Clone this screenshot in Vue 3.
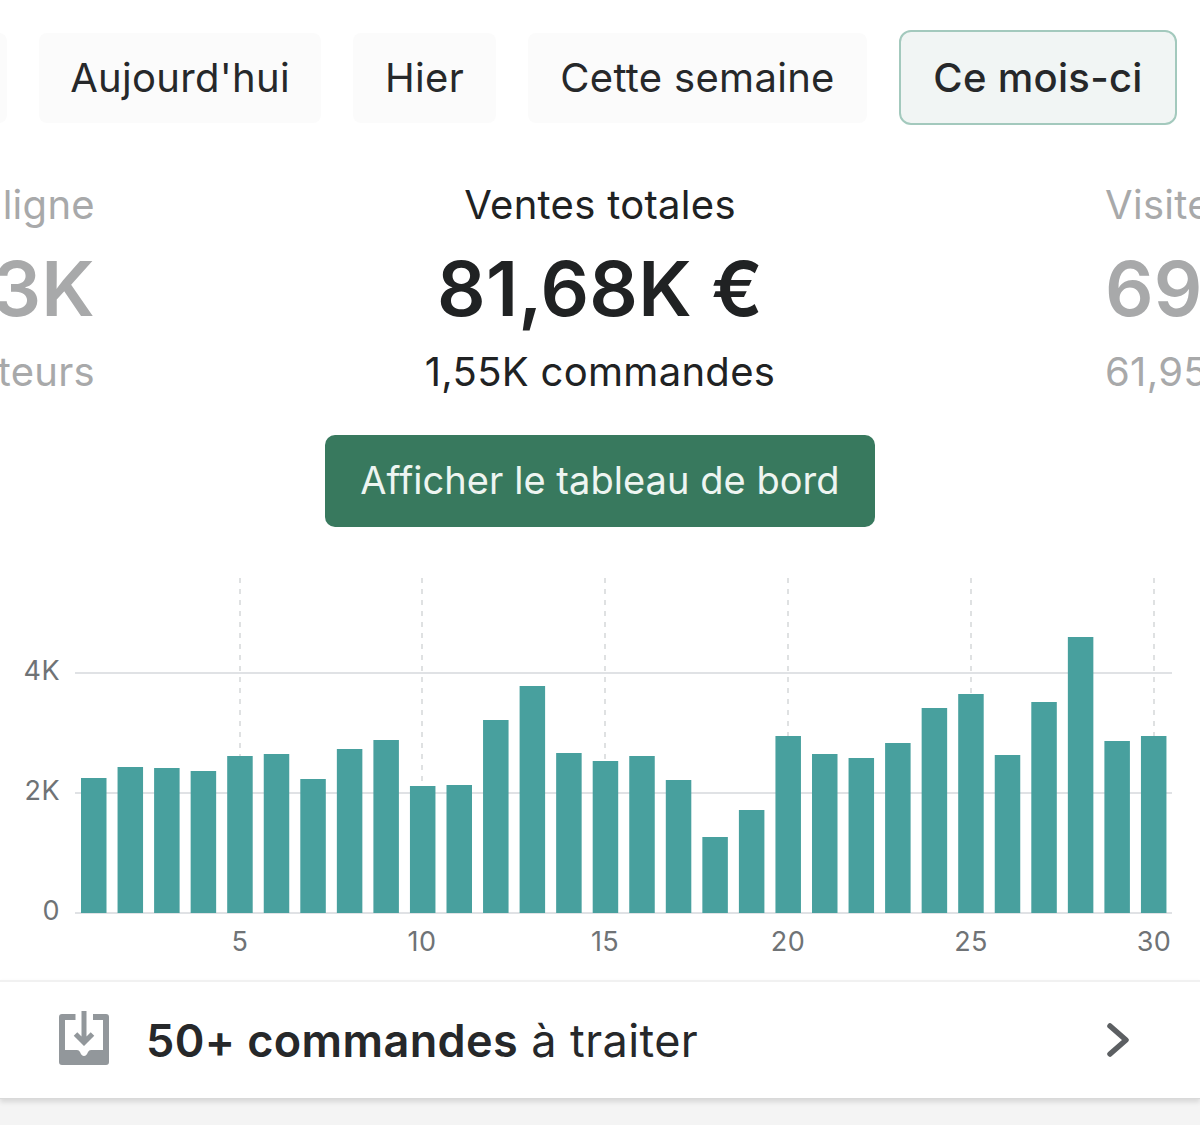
<script setup>
const tabs = [
  { label: 'Aujourd\'hui', width: 282 },
  { label: 'Hier', width: 143 },
  { label: 'Cette semaine', width: 339 },
]
const tops = [778, 767, 768, 771, 756, 754, 779, 749, 740, 786, 785, 720, 686, 753, 761, 756, 780, 837, 810, 736, 754, 758, 743, 708, 694, 755, 702, 637, 741, 736]
const bars = tops.map((top, i) => ({ x: 81 + i * 36.55, y: top - 570, h: 913 - top }))
const ticks = [
  { x: 240, label: '5' },
  { x: 422, label: '10' },
  { x: 605, label: '15' },
  { x: 788, label: '20' },
  { x: 971, label: '25' },
  { x: 1154, label: '30' },
]
const levels = [
  { y: 103, label: '4K' },
  { y: 223, label: '2K' },
  { y: 343, label: '0' },
]
</script>

<template>
  <main class="page">
    <nav class="tabs">
      <span class="tab stub"></span>
      <button v-for="tab in tabs" :key="tab.label" class="tab" :style="{ width: tab.width + 'px' }">{{ tab.label }}</button>
      <button class="tab active">Ce mois-ci</button>
    </nav>

    <section class="stats">
      <div class="stat side left">
        <div class="label">Boutique en ligne</div>
        <div class="value">1,13K</div>
        <div class="sub">61,2K visiteurs</div>
      </div>
      <div class="stat center">
        <div class="label">Ventes totales</div>
        <div class="value">81,68K €</div>
        <div class="sub">1,55K commandes</div>
      </div>
      <div class="stat side right">
        <div class="label">Visites</div>
        <div class="value">69,2K</div>
        <div class="sub">61,95K visiteurs</div>
      </div>
    </section>

    <div class="cta-row">
      <button class="cta">Afficher le tableau de bord</button>
    </div>

    <svg class="chart" width="1200" height="410" viewBox="0 0 1200 410">
      <line v-for="t in ticks" :key="'v' + t.x" :x1="t.x" :x2="t.x" y1="8" y2="343" class="vline" />
      <line v-for="l in levels" :key="'h' + l.y" x1="75" x2="1172" :y1="l.y" :y2="l.y" class="hline" />
      <rect v-for="(b, i) in bars" :key="i" :x="b.x" :y="b.y" width="25.5" :height="b.h" class="bar" />
      <text v-for="l in levels" :key="'t' + l.y" x="60" :y="l.y + 7" text-anchor="end" class="axis">{{ l.label }}</text>
      <text v-for="t in ticks" :key="'l' + t.x" :x="t.x" y="381" text-anchor="middle" class="axis">{{ t.label }}</text>
    </svg>

    <footer class="orders">
      <svg class="inbox" width="50" height="56" viewBox="0 0 50 56">
        <path d="M3 5H16.500V11H6V41H18Q20 41 21 43Q22.500 47 25 47Q27.500 47 29 43Q30 41 32 41H44V11H34V5H47Q50 5 50 8V53Q50 56 47 56H3Q0 56 0 53V8Q0 5 3 5Z" class="inbox-fill" />
        <path d="M25 2V33M16.500 25L25 33.500L33.500 25" class="inbox-arrow" />
      </svg>
      <p class="orders-text"><strong>50+ commandes</strong> à traiter</p>
      <svg class="chevron" width="24" height="36" viewBox="0 0 24 36">
        <path d="M4 4L20 18L4 32" />
      </svg>
    </footer>
    <div class="rest"></div>
  </main>
</template>

<style scoped>
.page {
  width: 1200px;
  height: 1125px;
  overflow: hidden;
  background: #fff;
  color: #202223;
  font-family: Inter, "Liberation Sans", sans-serif;
  display: flex;
  flex-direction: column;
}
.tabs {
  display: flex;
  justify-content: flex-end;
  align-items: center;
  gap: 32px;
  height: 95px;
  margin-top: 30px;
  padding-right: 23px;
  flex: none;
}
.tab {
  height: 90px;
  border: 0;
  border-radius: 8px;
  background: #fbfbfb;
  color: #26282a;
  font: 400 40px/1 Inter, "Liberation Sans", sans-serif;
  letter-spacing: 0.3px;
  padding: 0;
  flex: none;
}
.stub {
  width: 40px;
}
.active {
  width: 278px;
  height: 95px;
  border: 2px solid #a3c9bd;
  border-radius: 12px;
  background: #f1f5f4;
  font-weight: 500;
}
.stats {
  display: flex;
  margin-top: 55px;
  flex: none;
}
.stat {
  display: flex;
  flex-direction: column;
  white-space: nowrap;
  overflow: hidden;
}
.center {
  flex: 1;
  align-items: center;
}
.side {
  width: 95px;
  color: #a8a9aa;
}
.left {
  align-items: flex-end;
}
.right {
  align-items: flex-start;
}
.label,
.sub {
  font-size: 40px;
  line-height: 50px;
  letter-spacing: 0.3px;
}
.value {
  font-size: 76px;
  font-weight: 600;
  line-height: 76px;
  margin: 20px 0 21px;
  letter-spacing: 0.2px;
}
.cta-row {
  display: flex;
  justify-content: center;
  margin-top: 38px;
  flex: none;
}
.cta {
  width: 550px;
  height: 92px;
  border: 0;
  border-radius: 10px;
  background: #38795e;
  color: #eef5f1;
  font: 400 38px/1 Inter, "Liberation Sans", sans-serif;
  letter-spacing: 0.05px;
  padding: 0 0 2px;
}
.chart {
  display: block;
  margin-top: 43px;
  flex: none;
}
.vline {
  stroke: #d5d7d9;
  stroke-width: 1.5;
  stroke-dasharray: 5 6;
}
.hline {
  stroke: #d6d9dc;
  stroke-width: 1.5;
}
.bar {
  fill: #48a09e;
}
.axis {
  fill: #6f7376;
  font-size: 27px;
  letter-spacing: 0.4px;
  font-family: Inter, "Liberation Sans", sans-serif;
}
.orders {
  display: flex;
  align-items: center;
  height: 119px;
  flex: none;
  border-top: 2px solid #f1f1f1;
  border-bottom: 1px solid #d9d9d9;
  box-shadow: 0 3px 5px rgba(0, 0, 0, 0.12);
  box-sizing: border-box;
  padding-left: 59px;
  padding-right: 70px;
  position: relative;
  background: #fff;
}
.inbox {
  flex: none;
  margin-bottom: 6px;
}
.inbox-fill {
  fill: #92979b;
}
.inbox-arrow {
  fill: none;
  stroke: #92979b;
  stroke-width: 5;
}
.orders-text {
  flex: 1;
  margin: 0 0 0 37px;
  font-size: 45px;
  line-height: 1;
  letter-spacing: 0.4px;
  color: #26282a;
}
.orders-text strong {
  font-weight: 600;
}
.chevron path {
  fill: none;
  stroke: #5c5f62;
  stroke-width: 5.500;
  stroke-linecap: round;
  stroke-linejoin: round;
}
.rest {
  flex: 1;
  background: #f4f4f4;
}
</style>
